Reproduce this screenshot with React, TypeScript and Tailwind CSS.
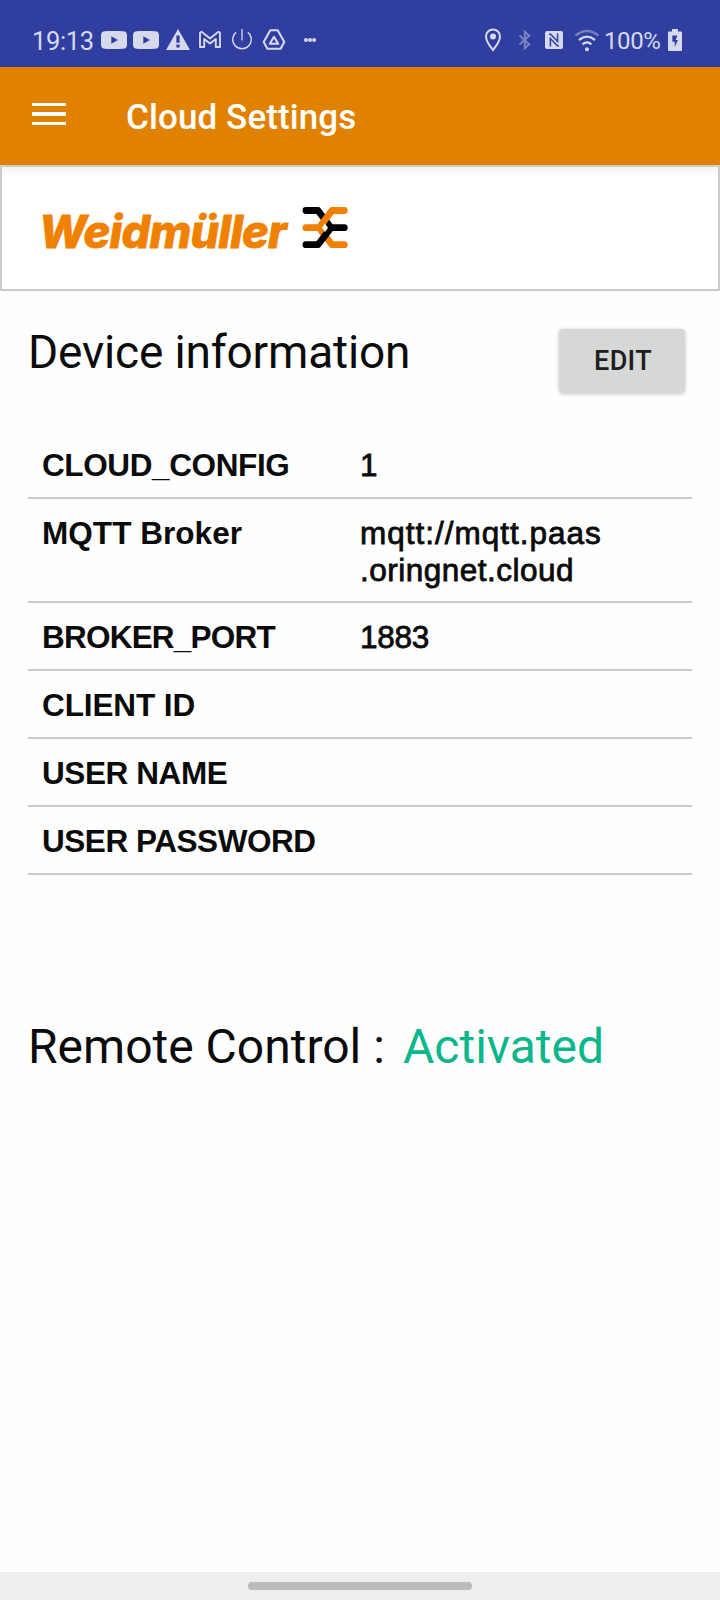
import React from "react";

const rows = [
  { label: "CLOUD_CONFIG", spacing: "tracking-[-0.38px]", value: [{ text: "1", spacing: "tracking-normal" }] },
  {
    label: "MQTT Broker",
    spacing: "tracking-[0.05px]",
    value: [
      { text: "mqtt://mqtt.paas", spacing: "tracking-[1px]" },
      { text: ".oringnet.cloud", spacing: "tracking-[0.5px]" },
    ],
  },
  { label: "BROKER_PORT", spacing: "tracking-[-0.78px]", value: [{ text: "1883", spacing: "tracking-[-0.3px]" }] },
  { label: "CLIENT ID", spacing: "tracking-[-0.1px]", value: [] },
  { label: "USER NAME", spacing: "tracking-[-0.4px]", value: [] },
  { label: "USER PASSWORD", spacing: "tracking-[-0.45px]", value: [] },
];

function YouTube() {
  return (
    <svg className="h-[18px] w-[26px] shrink-0" viewBox="101 31 26 18" fill="currentColor">
      <path fillRule="evenodd" d="M105 31.2Q114 30.6 123 31.2Q127 31.4 127 35V45Q127 48.6 123 48.8Q114 49.4 105 48.8Q101 48.6 101 45V35Q101 31.4 105 31.2ZM111.3 36.2V43.8L118 40Z" />
    </svg>
  );
}

function StatusBar() {
  return (
    <div className="flex h-[67px] shrink-0 items-start bg-[#303f9f] text-[#d6d9ec]">
      <div className="mt-[26px] ml-[32px] w-[69px] shrink-0 text-[25.5px] leading-[30px] tracking-[-0.35px]">19:13</div>
      <div className="mt-[27px] flex h-[26px] items-center">
        <YouTube />
        <div className="w-[6px]" />
        <YouTube />
        <svg className="ml-[7px] h-[26px] w-[24px]" viewBox="166 27 24 26" fill="currentColor">
          <path fillRule="evenodd" d="M178 29L190 50H166ZM176.4 35.5V42.8H179.6V35.5ZM176.4 44.5V47.5H179.6V44.5Z" />
        </svg>
        <svg className="ml-[8px] h-[26px] w-[24px]" viewBox="198 27 24 26" fill="none" stroke="currentColor" strokeWidth="1.9" strokeLinejoin="round">
          <path d="M200 47V33.4Q200 31.6 201.9 32L210 38.4L218.1 32Q220 31.6 220 33.4V47H215.8V39L210 43.6L204.2 39V47Z" />
        </svg>
        <svg className="ml-[9px] h-[26px] w-[22px]" viewBox="231 27 22 26" fill="none" stroke="currentColor" strokeWidth="1.3">
          <path d="M242 29V40.5M236.2 32.2A9.3 9.3 0 1 0 247.8 32.2" />
        </svg>
        <svg className="ml-[9px] h-[26px] w-[24px]" viewBox="262 27 24 26" fill="none" stroke="currentColor" strokeWidth="2.1" strokeLinejoin="round">
          <path d="M270.3 30.2H277.7L284.3 42L280.6 48.8H267.4L263.7 42ZM274 36.8L278.2 43.8H269.8Z" />
        </svg>
        <svg className="ml-[17px] h-[26px] w-[14px]" viewBox="303 27 14 26" fill="currentColor">
          <circle cx="305.9" cy="40" r="2" />
          <circle cx="310" cy="40" r="2" />
          <circle cx="314.1" cy="40" r="2" />
        </svg>
      </div>
      <div className="mt-[27px] ml-[167px] flex h-[26px] items-center">
        <svg className="h-[26px] w-[18px]" viewBox="484 27 18 26" fill="none" stroke="currentColor" strokeWidth="2">
          <path d="M493 50Q486 41.5 486 36.5A7 7 0 0 1 500 36.5Q500 41.5 493 50Z" />
          <circle cx="493" cy="36.5" r="3" fill="currentColor" stroke="none" />
        </svg>
        <svg className="ml-[16px] h-[26px] w-[14px] opacity-45" viewBox="518 27 14 26" fill="none" stroke="currentColor" strokeWidth="1.9">
          <path d="M519.5 35.5L529.3 44.3L524.8 48.3V31.7L529.3 35.7L519.5 44.5" />
        </svg>
        <svg className="ml-[13px] h-[26px] w-[18px]" viewBox="545 27 18 26">
          <rect x="545" y="31" width="18" height="18" rx="2" fill="currentColor" />
          <path d="M549 34.2H550.6L557.6 41.5V33.6M559 45.8H557.4L550.4 38.5V46.4" fill="none" stroke="#303f9f" strokeWidth="1.5" />
        </svg>
        <svg className="ml-[11px] h-[26px] w-[26px]" viewBox="574 27 26 26" fill="none" stroke="currentColor" strokeWidth="2.3">
          <path d="M575.5 35.5Q587 26.5 598.5 35.5" opacity=".42" />
          <path d="M579 40Q587 33.3 595 40M582.6 44.3Q587 40.5 591.4 44.3" />
          <circle cx="587" cy="49.3" r="2" fill="currentColor" stroke="none" />
        </svg>
      </div>
      <div className="mt-[26px] ml-[4px] w-[60px] text-[24px] leading-[31px] tracking-[-0.4px]">100%</div>
      <svg className="mt-[27px] ml-[4px] h-[26px] w-[14px]" viewBox="668 27 14 26" fill="currentColor">
        <path fillRule="evenodd" d="M672 29H678V31.5H681Q682 31.5 682 32.5V50Q682 51 681 51H669Q668 51 668 50V32.5Q668 31.5 669 31.5H672ZM672.3 35.5V41.7H674.7V47L678 40H675.7L677.3 35.5Z" />
      </svg>
    </div>
  );
}

function Logo() {
  return (
    <div className="flex h-[126px] shrink-0 items-start border-2 border-[#cccccc] bg-linear-to-b from-[#f4f4f4] to-white to-[10px]">
      <div className="mt-[35px] ml-[37px] w-[262px] shrink-0 font-['Inter'] text-[45px] leading-[60px] font-extrabold tracking-[-0.8px] whitespace-nowrap text-[#f08100] italic [-webkit-text-stroke:0.8px_#f08100]">
        Weidmüller
      </div>
      <svg className="mt-[38px] h-[46px] w-[48px] shrink-0" viewBox="301 205 48 46" fill="none" strokeWidth="6.8" strokeLinecap="round" strokeLinejoin="round">
        <path stroke="#000" d="M305.9 210.5H318L331 227.7H344.3" />
        <path stroke="#f08100" d="M305.9 227.7H319L332 210.5H344.3M319 227.7L332 244.7H344.3" />
        <path stroke="#000" d="M305.9 244.7H318L331 227.7" />
        <path fill="#fff" stroke="none" d="M325 223.5L328 227.7L325 232L322 227.7Z" />
      </svg>
    </div>
  );
}

export default function App() {
  return (
    <div className="flex h-[1600px] w-[720px] flex-col overflow-hidden bg-[#fefefe] font-['Roboto',sans-serif] text-[#0b0b0b]">
      <StatusBar />
      <header className="flex h-[98px] shrink-0 items-start bg-[#e08200] text-white">
        <div className="mt-[36px] ml-[32px] flex w-[34px] flex-col gap-[6px]">
          <div className="h-[3px] bg-white" />
          <div className="h-[4px] bg-white" />
          <div className="h-[3px] bg-white" />
        </div>
        <h1 className="mt-[31px] ml-[60px] text-[35px] leading-[40px] font-medium tracking-[0.1px]">Cloud Settings</h1>
      </header>
      <Logo />
      <section className="flex shrink-0 items-start justify-between pr-[35px] pl-[28px]">
        <h2 className="mt-[34px] text-[46px] leading-[54px] tracking-[-0.17px]">Device information</h2>
        <button className="mt-[38px] h-[64px] w-[126px] rounded-[4px] bg-[#d6d8d7] pt-[1px] pl-[2px] text-[27px] font-medium tracking-[0.3px] text-[#202020] shadow-[0_1px_4px_rgba(0,0,0,0.22)]">
          EDIT
        </button>
      </section>
      <dl className="mx-[28px] mt-[38px] font-['Liberation_Sans',sans-serif] text-[31.5px] leading-[37px]">
        {rows.map((row) => (
          <div key={row.label} className="flex min-h-[68px] border-b-2 border-[#cccccc] pt-[16px] pb-[12px] pl-[14px]">
            <dt className={`w-[318px] shrink-0 font-bold ${row.spacing}`}>{row.label}</dt>
            <dd className="[-webkit-text-stroke:0.8px_#0b0b0b]">
              {row.value.map((line) => (
                <div key={line.text} className={line.spacing}>{line.text}</div>
              ))}
            </dd>
          </div>
        ))}
      </dl>
      <p className="mt-[144px] ml-[28px] flex text-[48px] leading-[56px]">
        <span className="w-[375px]">Remote Control :</span>
        <span className="text-[#0ab68b]">Activated</span>
      </p>
      <footer className="mt-auto flex h-[28px] shrink-0 justify-center bg-[#efefef] pt-[10px]">
        <div className="h-[8px] w-[224px] rounded-full bg-[#bcbcbc]" />
      </footer>
    </div>
  );
}
